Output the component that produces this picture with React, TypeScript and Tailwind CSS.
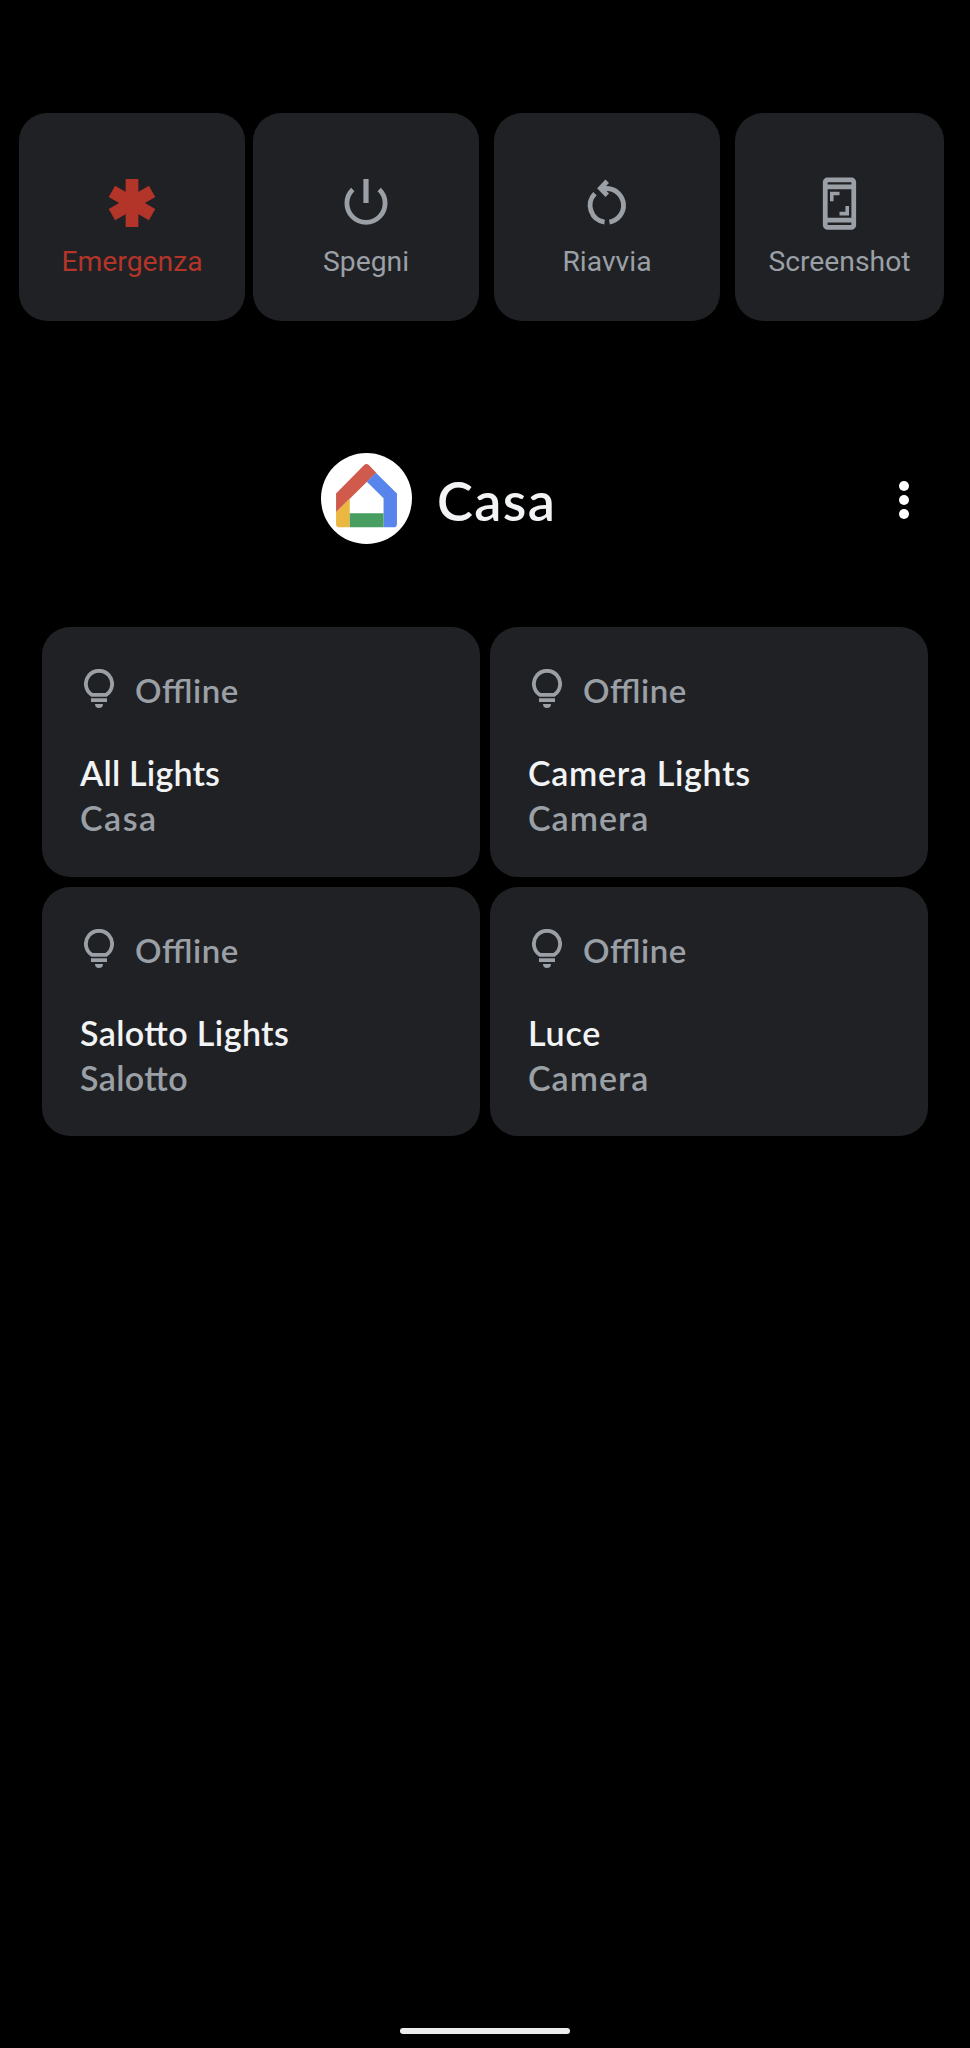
import type { ReactNode } from "react"

const powerActions = [
  {
    icon: <EmergencyIcon />,
    label: "Emergenza",
    className: "w-[226px] text-[#b33429]",
  },
  {
    icon: <PowerIcon />,
    label: "Spegni",
    className: "ml-2 w-[226px] text-[#9aa0a6]",
  },
  {
    icon: <RestartIcon />,
    label: "Riavvia",
    className: "ml-[15px] w-[226px] text-[#9aa0a6]",
  },
  {
    icon: <ScreenshotIcon />,
    label: "Screenshot",
    className: "ml-[15px] w-[209px] text-[#9aa0a6]",
  },
]

const devices = [
  { name: "All Lights", room: "Casa", nameClass: "tracking-[0.2px]", roomClass: "tracking-[1.5px]" },
  { name: "Camera Lights", room: "Camera", nameClass: "tracking-[0.7px]", roomClass: "tracking-[1px]" },
  { name: "Salotto Lights", room: "Salotto", nameClass: "tracking-[0.4px]", roomClass: "tracking-[0.4px]" },
  { name: "Luce", room: "Camera", nameClass: "tracking-[0.8px]", roomClass: "tracking-[1px]" },
]

function EmergencyIcon() {
  return (
    <svg className="h-[58px] w-[58px]" viewBox="-29 -29 58 58" fill="currentColor">
      <rect x="-6.4" y="-24" width="12.8" height="48" />
      <rect x="-6.4" y="-23.2" width="12.8" height="46.4" transform="rotate(60)" />
      <rect x="-6.4" y="-23.2" width="12.8" height="46.4" transform="rotate(-60)" />
    </svg>
  )
}

function PowerIcon() {
  return (
    <svg className="h-[58px] w-[58px]" viewBox="-29 -29 58 58" fill="none" stroke="currentColor">
      <path d="M0 -24V0" strokeWidth="5.2" />
      <path d="M-13.2 -13.6A19.1 19.1 0 1 0 13.2 -13.6" strokeWidth="4.8" />
    </svg>
  )
}

function RestartIcon() {
  return (
    <svg className="h-[58px] w-[58px]" viewBox="0 0 24 24" fill="none" stroke="currentColor" strokeWidth="2">
      <path d="M13 19.9A7 7 0 0 0 12 6H10" />
      <path d="M12.1 3L9.3 5.9L12.1 8.8" />
      <path d="M11 19.9A7 7 0 0 1 7 8.1" />
    </svg>
  )
}

function ScreenshotIcon() {
  return (
    <svg className="h-[57px] w-[57px]" viewBox="0 0 24 24" fill="currentColor">
      <path
        fillRule="evenodd"
        d="M17 1H7C5.9 1 5 1.9 5 3v18c0 1.1.9 2 2 2h10c1.1 0 2-.9 2-2V3c0-1.1-.9-2-2-2zM17 21H7v-1h10zM17 18H7V6h10zM17 4H7V3h10z"
      />
      <path d="M9.5 8.5H12V7H8v4h1.5zM12 17h4v-4h-1.5v2.5H12z" />
    </svg>
  )
}

function BulbIcon() {
  return (
    <svg className="h-[40px] w-[30px]" viewBox="0 0 30 40">
      <path
        d="M7.9 25.9A13.1 13.1 0 1 1 22.1 25.9Z"
        fill="none"
        stroke="currentColor"
        strokeWidth="3.8"
        strokeLinejoin="round"
      />
      <path d="M7 29.3H23V33H7ZM11 35H19A4 4 0 0 1 11 35Z" fill="currentColor" />
    </svg>
  )
}

function HomeLogo() {
  return (
    <svg className="h-[91px] w-[91px]" viewBox="61 69 272 272">
      <circle cx="197" cy="205" r="136" fill="#fff" />
      <path d="M106 246V190L190 105Q197 99 204 105L226 128Z" fill="#d05b4d" />
      <path d="M225 128L288 190V281Q288 291 278 291H248V204L198 155Z" fill="#5785ec" />
      <path d="M106 246L147 205V291H116Q106 291 106 281Z" fill="#ebb741" />
      <path d="M147 249H248V291H147Z" fill="#489d60" />
    </svg>
  )
}

function PowerButton({ icon, label, className }: { icon: ReactNode; label: string; className: string }) {
  return (
    <button className={`flex h-[207.5px] flex-col items-center rounded-[28px] bg-[#202124] pt-[61px] ${className}`}>
      <span className="flex h-[58px] items-center">{icon}</span>
      <span className="mt-[12px] text-[28.3px] leading-[36px]">{label}</span>
    </button>
  )
}

export default function App() {
  return (
    <div className="flex h-[2048px] w-[970px] flex-col bg-black font-[Roboto,sans-serif]">
      <div className="flex pt-[113px] pl-[19px]">
        {powerActions.map((action) => (
          <PowerButton key={action.label} {...action} />
        ))}
      </div>

      <div className="mt-[132.5px] flex h-[91px] items-center pr-[61px] pl-[320.5px]">
        <HomeLogo />
        <h1 className="ml-[25.5px] pt-[5px] font-[Lato,sans-serif] text-[54px] leading-[64px] font-semibold tracking-[1.4px] text-[#f1f3f4]">
          Casa
        </h1>
        <button className="ml-auto flex flex-col gap-[4.4px] pt-[3px]">
          <span className="h-[9.8px] w-[9.8px] rounded-full bg-white" />
          <span className="h-[9.8px] w-[9.8px] rounded-full bg-white" />
          <span className="h-[9.8px] w-[9.8px] rounded-full bg-white" />
        </button>
      </div>

      <div className="mt-[83px] grid grid-cols-2 gap-[10px] px-[42px] font-[Lato,sans-serif] text-[34px] leading-[44px] font-semibold [font-feature-settings:'liga'_1]">
        {devices.map((device) => (
          <div key={device.name} className="h-[249.5px] rounded-[28px] bg-[#202124] pl-[38px] text-[#9aa0a6]">
            <div className="flex pt-[42px] pl-[4px]">
              <BulbIcon />
              <span className="ml-[21px] h-[46px] text-[33px] leading-[42px] tracking-[0.6px]">Offline</span>
            </div>
            <p className={`mt-[36px] text-[#f1f3f4] ${device.nameClass}`}>{device.name}</p>
            <p className={`pt-px ${device.roomClass}`}>{device.room}</p>
          </div>
        ))}
      </div>

      <div className="mx-auto mt-auto mb-[14px] h-[6px] w-[170px] rounded-full bg-[#ededed]" />
    </div>
  )
}
